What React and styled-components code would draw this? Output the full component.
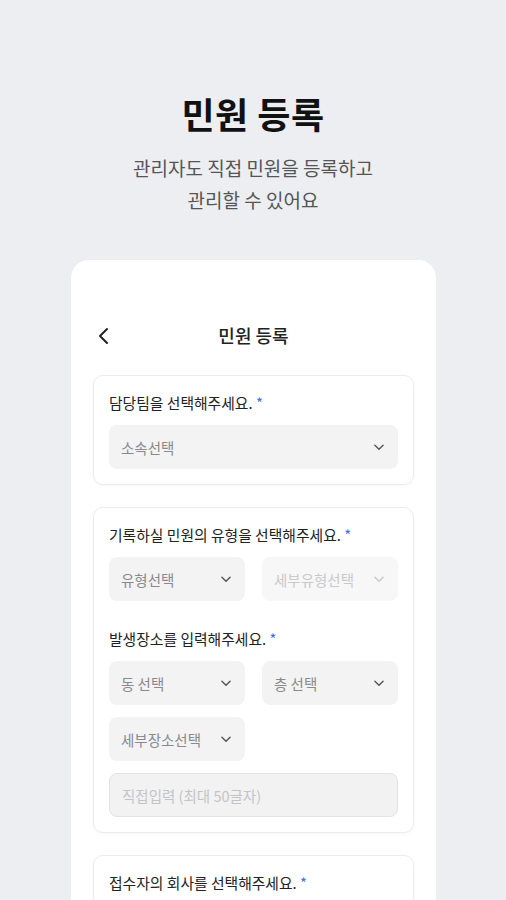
import React from "react";
import styled, { createGlobalStyle } from "styled-components";

const GlobalStyle = createGlobalStyle`
  html, body {
    margin: 0;
    padding: 0;
    background: #eceef1;
    font-family: "Noto Sans CJK KR", "Noto Sans", sans-serif;
    overflow: hidden;
  }
`;

const Chevron = ({ light }) => (
  <svg width="14" height="14" viewBox="0 0 24 24" fill="none"
    stroke={light ? "#c9c9cc" : "#555"} strokeWidth="2.4"
    strokeLinecap="round" strokeLinejoin="round">
    <path d="M5 9l7 7 7-7" />
  </svg>
);

export default function App() {
  return (
    <Page>
      <GlobalStyle />
      <Hero>
        <Title>민원 등록</Title>
        <Sub>
          관리자도 직접 민원을 등록하고
          <br />
          관리할 수 있어요
        </Sub>
      </Hero>
      <Phone>
        <Header>
          <Back>
            <svg width="16" height="18" viewBox="0 0 16 18" fill="none"
              stroke="#222" strokeWidth="2" strokeLinecap="round" strokeLinejoin="round">
              <path d="M10 2L3 9l7 7" />
            </svg>
          </Back>
          <HeaderTitle>민원 등록</HeaderTitle>
        </Header>

        <Section>
          <Label>
            담당팀을 선택해주세요. <Star>*</Star>
          </Label>
          <Select $wide>
            <span>소속선택</span>
            <Chevron />
          </Select>
        </Section>

        <Section>
          <Label>
            기록하실 민원의 유형을 선택해주세요. <Star>*</Star>
          </Label>
          <Row>
            <Select>
              <span>유형선택</span>
              <Chevron />
            </Select>
            <Select $disabled>
              <span>세부유형선택</span>
              <Chevron light />
            </Select>
          </Row>
          <Label $spaced>
            발생장소를 입력해주세요. <Star>*</Star>
          </Label>
          <Row>
            <Select>
              <span>동 선택</span>
              <Chevron />
            </Select>
            <Select>
              <span>층 선택</span>
              <Chevron />
            </Select>
          </Row>
          <Row>
            <Select>
              <span>세부장소선택</span>
              <Chevron />
            </Select>
          </Row>
          <Input placeholder="직접입력 (최대 50글자)" disabled />
        </Section>

        <Section>
          <Label>
            접수자의 회사를 선택해주세요. <Star>*</Star>
          </Label>
          <Hint>접수자의 회사가 목록에 없다면 직접 입력해주세요.</Hint>
        </Section>
      </Phone>
    </Page>
  );
}

const Page = styled.div`
  width: 506px;
  height: 900px;
  display: flex;
  flex-direction: column;
  align-items: center;
  overflow: hidden;
`;

const Hero = styled.div`
  display: flex;
  flex-direction: column;
  align-items: center;
  padding-top: 86px;
`;

const Title = styled.h1`
  margin: 0;
  font-size: 36px;
  font-weight: 700;
  color: #111;
  line-height: 54px;
  letter-spacing: 0.5px;
`;

const Sub = styled.p`
  margin: 12px 0 0;
  font-size: 19px;
  line-height: 32px;
  color: #555;
  text-align: center;
`;

const Phone = styled.div`
  margin-top: 44px;
  width: 365px;
  margin-left: 1px;
  flex: 1;
  background: #fff;
  border-radius: 18px 18px 0 0;
  padding: 60px 22px 0;
  box-sizing: border-box;
  display: flex;
  flex-direction: column;
  gap: 22px;
`;

const Header = styled.div`
  position: relative;
  height: 30px;
  display: flex;
  align-items: center;
  justify-content: center;
  margin-bottom: 3px;
`;

const Back = styled.div`
  position: absolute;
  left: 4px;
  top: 6px;
`;

const HeaderTitle = styled.div`
  font-size: 18px;
  font-weight: 500;
  color: #222;
`;

const Section = styled.div`
  border: 1px solid #ececee;
  border-radius: 10px;
  box-shadow: 0 1px 3px rgba(0, 0, 0, 0.04);
  padding: 17px 15px 15px;
  display: flex;
  flex-direction: column;
  gap: 12px;
`;

const Label = styled.div`
  font-size: 14.8px;
  color: #222;
  line-height: 20px;
  margin-top: ${(p) => (p.$spaced ? "16px" : "0")};
  margin-bottom: 0;
`;

const Star = styled.span`
  color: #3b6cf0;
`;

const Row = styled.div`
  display: grid;
  grid-template-columns: 136px 136px;
  gap: 17px;
`;

const Select = styled.div`
  height: 44px;
  width: ${(p) => (p.$wide ? "100%" : "auto")};
  box-sizing: border-box;
  border-radius: 8px;
  background: ${(p) => (p.$disabled ? "#f7f7f8" : "#f3f3f4")};
  display: flex;
  align-items: center;
  justify-content: space-between;
  padding: 0 12px;
  font-size: 14.5px;
  color: ${(p) => (p.$disabled ? "#c9c9cc" : "#8a8a8e")};
  svg {
    flex-shrink: 0;
  }
`;

const Input = styled.input`
  height: 44px;
  box-sizing: border-box;
  border: 1px solid #e3e3e5;
  border-radius: 8px;
  background: #f2f2f3;
  padding: 0 12px;
  font-family: inherit;
  font-size: 14.5px;
  &::placeholder {
    color: #c4c4c7;
  }
`;

const Hint = styled.div`
  font-size: 12px;
  color: #9a9a9e;
  margin-top: -4px;
`;
